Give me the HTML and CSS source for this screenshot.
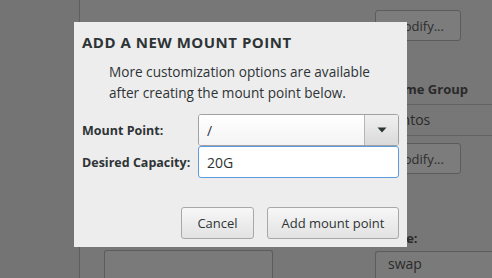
FILE: index.html
```html
<!DOCTYPE html>
<html lang="en">
<head>
    <meta charset="UTF-8">
    <title>Add a new mount point</title>
    <link rel="stylesheet" href="styles.css">
</head>
<body>

<div class="janela">
    <!-- Barra lateral escurecida -->
    <div class="lateral"></div>

    <!-- Area principal atras do dialogo -->
    <div class="principal">
        <div class="coluna-esq">
            <div class="caixa-vazia"></div>
        </div>
        <div class="coluna-dir">
            <div class="botao-fundo">Modify...</div>
            <div class="rotulo-fundo rotulo-grupo">Volume Group</div>
            <div class="linha-lista">centos</div>
            <div class="botao-fundo botao-baixo">Modify...</div>
            <div class="rotulo-fundo rotulo-nome">Name:</div>
            <div class="campo-fundo">swap</div>
        </div>
    </div>

    <!-- Dialogo -->
    <div class="dialogo">
        <h1>ADD A NEW MOUNT POINT</h1>
        <p class="aviso">More customization options are available after creating the mount point below.</p>

        <div class="formulario">
            <label for="ponto">Mount Point:</label>
            <div class="combo">
                <input type="text" id="ponto" value="/">
                <span class="seta">
                    <svg width="10" height="6" viewBox="0 0 10 6"><path d="M0.5 0.5 L9.5 0.5 L5 5.5 Z" fill="#2e3436"/></svg>
                </span>
            </div>
            <label for="capacidade">Desired Capacity:</label>
            <input type="text" id="capacidade" class="entrada foco" value="20G">
        </div>

        <div class="acoes">
            <button type="button" class="botao">Cancel</button>
            <button type="button" class="botao botao-largo">Add mount point</button>
        </div>
    </div>
</div>

</body>
</html>
```

FILE: styles.css
```css
/* Estilos Gerais */
body {
    margin: 0;
    font-family: "Open Sans", "Noto Sans", sans-serif;
    overflow: hidden;
}

.janela {
    position: relative;
    display: flex;
    width: 492px;
    height: 278px;
    background-color: #777777;
    overflow: hidden;
}

.lateral {
    width: 79px;
    flex-shrink: 0;
    background-color: #747474;
    border-right: 1px solid #5e5e5e;
}

.principal {
    flex: 1;
    display: flex;
}

/* Coluna da esquerda (fundo) */
.coluna-esq {
    width: 295px;
    display: flex;
    flex-direction: column;
    justify-content: flex-end;
    padding-left: 24px;
    box-sizing: border-box;
}

.caixa-vazia {
    width: 167px;
    height: 27px;
    border: 1px solid #5c5c5c;
    border-bottom: none;
    border-radius: 3px 3px 0 0;
    background-color: #7a7a7a;
}

/* Coluna da direita (fundo) */
.coluna-dir {
    flex: 1;
    padding-top: 10px;
    color: #2a2a2a;
    font-size: 14px;
}

.botao-fundo {
    width: 86px;
    height: 31px;
    line-height: 31px;
    box-sizing: border-box;
    border: 1px solid #5c5c5c;
    border-radius: 3px;
    background-color: #7c7c7c;
    text-align: center;
    font-size: 13px;
    color: #2d2d2d;
}

.rotulo-fundo {
    font-weight: bold;
    font-size: 13px;
    line-height: 18px;
}

.rotulo-grupo {
    margin-top: 39px;
    padding-bottom: 6px;
    border-bottom: 1px solid #626262;
}

.linha-lista {
    height: 30px;
    line-height: 30px;
    padding-left: 12px;
    border-bottom: 1px solid #626262;
}

.botao-baixo {
    margin-top: 7px;
}

.rotulo-nome {
    margin-top: 55px;
}

.campo-fundo {
    margin-top: 4px;
    height: 40px;
    padding: 2px 0 0 12px;
    box-sizing: border-box;
    border: 1px solid #5c5c5c;
    border-right: none;
    border-bottom: none;
    border-radius: 3px 0 0 0;
    background-color: #7a7a7a;
}

/* Dialogo sobreposto */
.dialogo {
    position: absolute;
    left: 74px;
    top: 22px;
    width: 333px;
    height: 225px;
    background-color: #ededed;
    color: #2e3436;
    padding: 0 8px 8px;
    box-sizing: border-box;
    display: flex;
    flex-direction: column;
}

h1 {
    margin: 10px 0 0;
    font-size: 15px;
    font-weight: bold;
    letter-spacing: 0.5px;
}

.aviso {
    margin: 9px 0 0 27px;
    font-size: 13.6px;
    line-height: 21px;
}

.formulario {
    margin-top: 11px;
    display: grid;
    grid-template-columns: 106px 201px;
    column-gap: 10px;
    align-items: center;
}

label {
    font-weight: bold;
    font-size: 12.5px;
    white-space: nowrap;
}

.combo {
    display: flex;
    height: 32px;
    box-sizing: border-box;
    border: 1px solid #a1a1a1;
    border-radius: 3px;
    background-color: #ffffff;
    overflow: hidden;
}

.combo input {
    flex: 1;
    min-width: 0;
    border: none;
    outline: none;
    padding: 0 8px;
    font-family: inherit;
    font-size: 14px;
    color: #2e3436;
    background: linear-gradient(#ffffff, #f4f4f4);
}

.seta {
    width: 33px;
    display: flex;
    align-items: center;
    justify-content: center;
    border-left: 1px solid #b6b6b6;
    background: linear-gradient(#f0f0f0, #dadada);
}

.entrada {
    height: 32px;
    box-sizing: border-box;
    border: 1px solid #a1a1a1;
    border-radius: 3px;
    padding: 0 8px;
    font-family: inherit;
    font-size: 14px;
    color: #2e3436;
    background-color: #ffffff;
    outline: none;
}

.foco {
    border-color: #5d9be0;
}

.acoes {
    margin-top: auto;
    display: flex;
    justify-content: flex-end;
    gap: 13px;
}

.botao {
    width: 73px;
    height: 32px;
    border: 1px solid #a8a8a8;
    border-radius: 3px;
    background: linear-gradient(#f7f7f7, #e2e2e2);
    font-family: inherit;
    font-size: 13px;
    color: #2e3436;
    padding: 0;
}

.botao-largo {
    width: 132px;
}
```
